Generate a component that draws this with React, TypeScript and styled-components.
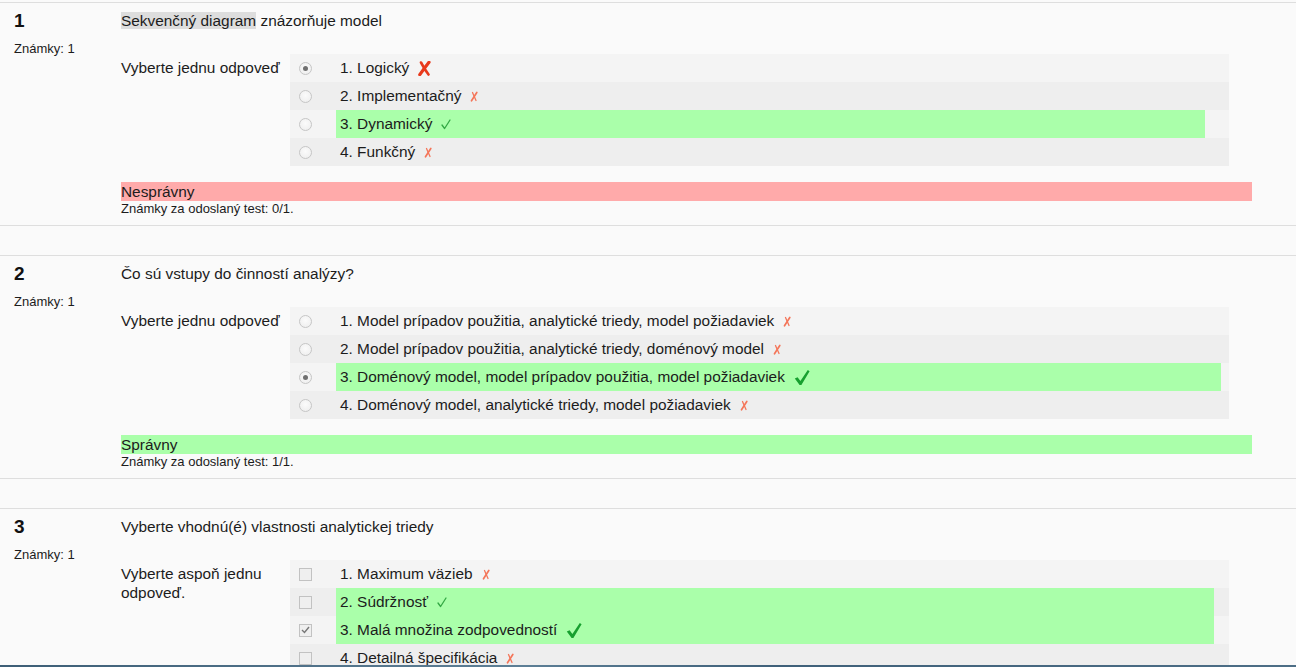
import React from "react";
import styled, { createGlobalStyle } from "styled-components";

type Answer = { text: string; selected?: boolean; correct?: boolean };
type Question = {
  no: number;
  text: { t: string; hl?: boolean }[];
  prompt: string;
  kind: "radio" | "checkbox";
  labelGap: number;
  answers: Answer[];
  result?: { ok: boolean; label: string };
  score?: string;
};

const questions: Question[] = [
  {
    no: 1,
    text: [{ t: "Sekvenčný diagram", hl: true }, { t: " znázorňuje model" }],
    prompt: "Vyberte jednu odpoveď",
    kind: "radio",
    labelGap: 24,
    answers: [
      { text: "1. Logický", selected: true },
      { text: "2. Implementačný" },
      { text: "3. Dynamický", correct: true },
      { text: "4. Funkčný" },
    ],
    result: { ok: false, label: "Nesprávny" },
    score: "Známky za odoslaný test: 0/1.",
  },
  {
    no: 2,
    text: [{ t: "Čo sú vstupy do činností analýzy?" }],
    prompt: "Vyberte jednu odpoveď",
    kind: "radio",
    labelGap: 8,
    answers: [
      { text: "1. Model prípadov použitia, analytické triedy, model požiadaviek" },
      { text: "2. Model prípadov použitia, analytické triedy, doménový model" },
      { text: "3. Doménový model, model prípadov použitia, model požiadaviek", selected: true, correct: true },
      { text: "4. Doménový model, analytické triedy, model požiadaviek" },
    ],
    result: { ok: true, label: "Správny" },
    score: "Známky za odoslaný test: 1/1.",
  },
  {
    no: 3,
    text: [{ t: "Vyberte vhodnú(é) vlastnosti analytickej triedy" }],
    prompt: "Vyberte aspoň jednu odpoveď.",
    kind: "checkbox",
    labelGap: 15,
    answers: [
      { text: "1. Maximum väzieb" },
      { text: "2. Súdržnosť", correct: true },
      { text: "3. Malá množina zodpovedností", selected: true, correct: true },
      { text: "4. Detailná špecifikácia" },
    ],
  },
];

const GlobalStyle = createGlobalStyle`
  html, body {
    margin: 0;
    background: #fafafa;
  }
  body {
    font-family: "Liberation Sans", Arial, sans-serif;
    color: #1c1c1c;
    overflow: hidden;
  }
`;

const List = styled.div`
  padding-top: 2px;
  display: flex;
  flex-direction: column;
  gap: 29px;
`;

const Que = styled.div`
  display: grid;
  grid-template-columns: 121px 1fr;
  padding-right: 44px;
  border-top: 1px solid #dedede;
  border-bottom: 1px solid #dedede;
`;

const Info = styled.div`
  padding: 8px 0 0 14px;
`;

const Num = styled.div`
  font-size: 19px;
  font-weight: bold;
  line-height: 20px;
  color: #111;
`;

const Grade = styled.div`
  margin-top: 10px;
  font-size: 13px;
  line-height: 15px;
`;

const Content = styled.div`
  padding: 8px 0 8px;
`;

const QText = styled.div`
  font-size: 15.4px;
  line-height: 20px;
`;

const Hl = styled.span`
  background: #dddddd;
`;

const Ablock = styled.div`
  margin-top: 23px;
  display: grid;
  grid-template-columns: 169px 1fr;
  padding-right: 23px;
`;

const Prompt = styled.div`
  font-size: 15.4px;
  line-height: 19px;
  padding: 4px 9px 0 0;
`;

const Rows = styled.div`
  display: flex;
  flex-direction: column;
`;

const Row = styled.div<{ $odd: boolean }>`
  height: 28px;
  display: flex;
  align-items: stretch;
  background: ${(p) => (p.$odd ? "#eeeeee" : "#f4f4f4")};
`;

const Ctrl = styled.div`
  width: 46px;
  display: flex;
  align-items: center;
  padding-left: 9px;
  box-sizing: border-box;
`;

const Radio = styled.span<{ $on?: boolean }>`
  width: 13px;
  height: 13px;
  border-radius: 50%;
  box-sizing: border-box;
  border: 1px solid #c6c6c6;
  background: radial-gradient(circle at 50% 40%, #fbfbfb, #ececec);
  display: flex;
  align-items: center;
  justify-content: center;
  &::after {
    content: "";
    width: 5px;
    height: 5px;
    border-radius: 50%;
    background: ${(p) => (p.$on ? "#707070" : "transparent")};
  }
`;

const Box = styled.span`
  width: 13px;
  height: 13px;
  box-sizing: border-box;
  border: 1px solid #c2c2c2;
  background: #efefef;
  display: flex;
  align-items: center;
  justify-content: center;
`;

const Label = styled.div<{ $ok?: boolean; $gap: number }>`
  flex: 1;
  margin-right: ${(p) => p.$gap}px;
  padding-left: 4px;
  display: flex;
  align-items: center;
  font-size: 15.4px;
  white-space: nowrap;
  background: ${(p) => (p.$ok ? "#aaffaa" : "transparent")};
`;

const Mark = styled.span`
  display: inline-flex;
  margin-left: 9px;
`;

const Result = styled.div<{ $ok: boolean }>`
  margin-top: 16px;
  height: 19px;
  line-height: 19px;
  font-size: 15.4px;
  background: ${(p) => (p.$ok ? "#aaffaa" : "#ffaaaa")};
`;

const Score = styled.div`
  font-size: 13px;
  line-height: 16px;
`;

const Taskbar = styled.div`
  position: fixed;
  left: 0;
  right: 0;
  bottom: 0;
  height: 2px;
  background: linear-gradient(90deg, #3d5e76, #5d7f96 40%, #3f6079 60%, #4d6e86);
`;

const BigCross = () => (
  <svg width="13" height="15" viewBox="0 0 13 15">
    <path d="M3 1.5 C5 5 7 9 10.5 13.5" stroke="#e8391c" strokeWidth="2.6" strokeLinecap="round" fill="none" />
    <path d="M11 1.2 C8 5 5 9 1.8 13.6" stroke="#e8391c" strokeWidth="3.2" strokeLinecap="round" fill="none" />
  </svg>
);

const SmallCross = () => (
  <svg width="8" height="11" viewBox="0 0 8 11">
    <path d="M2.5 1.5 L6 9.5" stroke="#f4765a" strokeWidth="1.3" strokeLinecap="round" />
    <path d="M6.8 1.5 L1.5 9.8" stroke="#f4765a" strokeWidth="1.7" strokeLinecap="round" />
  </svg>
);

const SmallCheck = () => (
  <svg width="10" height="11" viewBox="0 0 10 11">
    <path d="M1 6 L3.6 9.5 L9 1" stroke="#33a844" strokeWidth="1.3" fill="none" strokeLinecap="round" strokeLinejoin="round" />
  </svg>
);

const BigCheck = () => (
  <svg width="16" height="17" viewBox="0 0 16 17">
    <path d="M0.8 9.6 L3.6 8.2 L6.4 12 L13.8 1 L15.6 2.2 L7.4 16 L5.6 16 Z" fill="#17a02f" />
  </svg>
);

const BoxTick = () => (
  <svg width="9" height="8" viewBox="0 0 9 8">
    <path d="M1 4 L3.5 6.5 L8 1" stroke="#777" strokeWidth="1.4" fill="none" />
  </svg>
);

const markFor = (a: Answer) => {
  if (a.correct) return a.selected ? <BigCheck /> : <SmallCheck />;
  return a.selected ? <BigCross /> : <SmallCross />;
};

const QuestionBlock: React.FC<{ q: Question }> = ({ q }) => (
  <Que>
    <Info>
      <Num>{q.no}</Num>
      <Grade>Známky: 1</Grade>
    </Info>
    <Content>
      <QText>
        {q.text.map((p, i) => (p.hl ? <Hl key={i}>{p.t}</Hl> : <span key={i}>{p.t}</span>))}
      </QText>
      <Ablock>
        <Prompt>{q.prompt}</Prompt>
        <Rows>
          {q.answers.map((a, i) => (
            <Row key={i} $odd={i % 2 === 1}>
              <Ctrl>
                {q.kind === "radio" ? (
                  <Radio $on={a.selected} />
                ) : (
                  <Box>{a.selected && <BoxTick />}</Box>
                )}
              </Ctrl>
              <Label $ok={a.correct} $gap={q.labelGap}>
                {a.text}
                <Mark>{markFor(a)}</Mark>
              </Label>
            </Row>
          ))}
        </Rows>
      </Ablock>
      {q.result && <Result $ok={q.result.ok}>{q.result.label}</Result>}
      {q.score && <Score>{q.score}</Score>}
    </Content>
  </Que>
);

export default function App() {
  return (
    <>
      <GlobalStyle />
      <List>
        {questions.map((q) => (
          <QuestionBlock key={q.no} q={q} />
        ))}
      </List>
      <Taskbar />
    </>
  );
}
